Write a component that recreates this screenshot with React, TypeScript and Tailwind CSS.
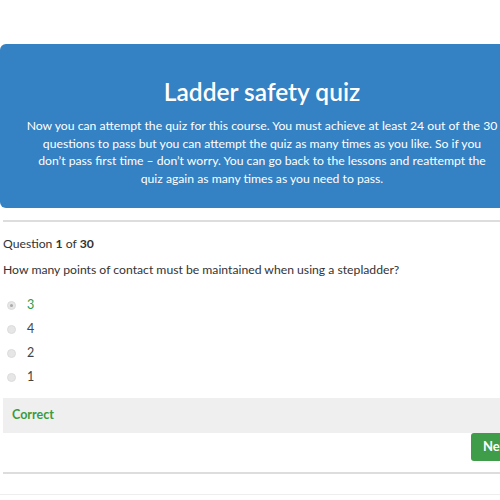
export default function App() {
  const options = ["3", "4", "2", "1"];
  return (
    <div className="w-[500px] h-[500px] overflow-hidden bg-white font-['Lato',sans-serif] text-[#333]">
      {/* Header */}
      <div className="pt-[44px] w-[524px]">
        <div className="bg-[#3481c4] rounded-[6px] h-[164px] pt-[31px] text-center text-white">
          <h1 className="text-[24.5px] font-semibold leading-[34px]">Ladder safety quiz</h1>
          <p className="mx-auto w-[480px] mt-[8px] text-[12.2px] leading-[17.6px]">
            Now you can attempt the quiz for this course. You must achieve at least 24 out of the 30 questions to pass but
            you can attempt the quiz as many times as you like. So if you
            <br />
            don’t pass first time – don’t worry. You can go back to the lessons and reattempt the
            <br />
            quiz again as many times as you need to pass.
          </p>
        </div>
      </div>

      <div className="ml-[3px] w-[530px]">
        <div className="mt-[12px] h-[2px] bg-[#dddddd]" />

        <div className="mt-[13px] text-[12.2px] leading-[18px]">
          Question <b>1</b> of <b>30</b>
        </div>
        <div className="mt-[8px] text-[12.2px] leading-[18px]">
          How many points of contact must be maintained when using a stepladder?
        </div>

        <div className="mt-[17px] flex flex-col gap-[6px] pl-[4px]">
          {options.map((o, i) => (
            <label key={o} className="flex items-center h-[18px] text-[12.5px]">
              <span className="w-[9px] h-[9px] rounded-full bg-[#e6e6e6] border border-[#dcdcdc] flex items-center justify-center">
                {i === 0 && <span className="w-[3px] h-[3px] rounded-full bg-[#aaa]" />}
              </span>
              <span className={i === 0 ? "ml-[11px] text-[#2e9a45]" : "ml-[11px] text-[#444]"}>{o}</span>
            </label>
          ))}
        </div>

        <div className="mt-[12px] h-[35px] bg-[#efefef] flex items-center pl-[9px] text-[12.5px] font-bold text-[#3a9b3f]">
          Correct
        </div>

        <div className="flex pl-[468px]">
          <button className="h-[28px] px-[12px] rounded-[3px] bg-[#3f9d4a] text-white text-[13px] font-bold">
            Next
          </button>
        </div>

        <div className="mt-[11px] h-[2px] bg-[#dddddd]" />
      </div>
      <div className="mt-[20px] h-px bg-[#eeeeee]" />
    </div>
  );
}
